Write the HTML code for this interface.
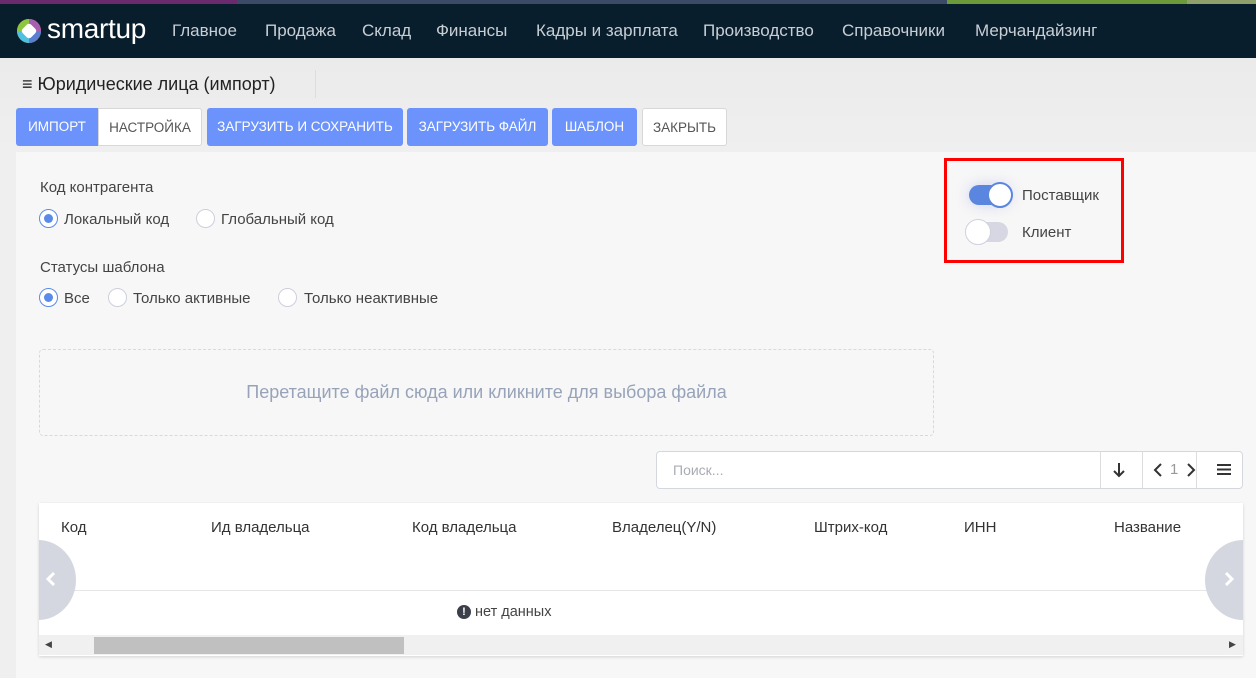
<!DOCTYPE html><html><head><meta charset="utf-8"><style>
*{box-sizing:border-box;margin:0;padding:0}
body{width:1256px;height:678px;overflow:hidden;font-family:"Liberation Sans","DejaVu Sans",sans-serif;background:linear-gradient(#e8e8e9,#efefef 150px);position:relative;color:#333}
.a{position:absolute;white-space:nowrap}
.nav{position:absolute;left:0;top:0;width:1256px;height:58px;background:#081e2d}
.nav .t{font-size:17px;color:#c9ced4}
.btn{position:absolute;top:108px;height:38px;line-height:38px;font-size:13.5px;text-align:center;border-radius:3px;color:#fff;background:#6b93fb}
.w{background:#fff;color:#555;border:1px solid #d8d8d8}
.lbl{font-size:15px;color:#444}
.rad{position:absolute;width:19px;height:19px;border-radius:50%;border:1px solid #ccd0da;background:#fff}
.rad.on{border-color:#5b8be8}
.rad.on:after{content:"";position:absolute;left:4px;top:4px;width:9px;height:9px;border-radius:50%;background:#5b8be8}
.th{font-size:15px;color:#333;top:519px}
</style></head><body>
<div class="a" style="left:0;top:0;width:237px;height:4px;background:#6b2a6e"></div>
<div class="a" style="left:237px;top:0;width:710px;height:4px;background:#3b4a66"></div>
<div class="a" style="left:947px;top:0;width:240px;height:4px;background:#6c9a3a"></div>
<div class="a" style="left:1187px;top:0;width:69px;height:4px;background:#8fa06b"></div>
<div class="nav" style="top:4px;height:54px">
<svg class="a" style="left:16px;top:13px" width="26" height="28" viewBox="0 0 26 28"><circle cx="13" cy="14" r="12" fill="#f08a2a"/><path d="M13 2A12 12 0 0 1 25 14L13 14Z" fill="#a75fb0"/><path d="M25 14A12 12 0 0 1 13 26L13 14Z" fill="#5b7fd0"/><path d="M13 26A12 12 0 0 1 1 14L13 14Z" fill="#4fc0e0"/><path d="M1 14A12 12 0 0 1 13 2L13 14Z" fill="#8cc63f"/><rect x="7" y="8" width="12" height="12" rx="3" fill="#fff" transform="rotate(45 13 14)"/></svg>
<div class="a" style="left:47px;top:9px;font-size:28px;color:#fff;letter-spacing:-0.3px">smartup</div>
<div class="a t" style="left:172px;top:17px">Главное</div>
<div class="a t" style="left:265px;top:17px">Продажа</div>
<div class="a t" style="left:362px;top:17px">Склад</div>
<div class="a t" style="left:436px;top:17px">Финансы</div>
<div class="a t" style="left:536px;top:17px">Кадры и зарплата</div>
<div class="a t" style="left:703px;top:17px">Производство</div>
<div class="a t" style="left:842px;top:17px">Справочники</div>
<div class="a t" style="left:975px;top:17px">Мерчандайзинг</div>
</div>
<div class="a" style="left:22px;top:74px;font-size:18px;color:#222">≡ Юридические лица (импорт)</div>
<div class="a" style="left:315px;top:70px;width:1px;height:28px;background:#ddd"></div>
<div class="btn" style="left:16px;width:82px;border-radius:3px 0 0 3px">ИМПОРТ</div>
<div class="btn w" style="left:98px;width:104px;border-radius:0 3px 3px 0">НАСТРОЙКА</div>
<div class="btn" style="left:207px;width:196px">ЗАГРУЗИТЬ И СОХРАНИТЬ</div>
<div class="btn" style="left:407px;width:141px">ЗАГРУЗИТЬ ФАЙЛ</div>
<div class="btn" style="left:552px;width:85px">ШАБЛОН</div>
<div class="btn w" style="left:642px;width:85px">ЗАКРЫТЬ</div>
<div class="a" style="left:16px;top:152px;width:1240px;height:526px;background:#f7f7f7"></div>
<div class="a lbl" style="left:40px;top:179px">Код контрагента</div>
<div class="rad on" style="left:39px;top:209px"></div><div class="a lbl" style="left:64px;top:211px">Локальный код</div>
<div class="rad" style="left:196px;top:209px"></div><div class="a lbl" style="left:221px;top:211px">Глобальный код</div>
<div class="a lbl" style="left:40px;top:259px">Статусы шаблона</div>
<div class="rad on" style="left:39px;top:288px"></div><div class="a lbl" style="left:64px;top:290px">Все</div>
<div class="rad" style="left:108px;top:288px"></div><div class="a lbl" style="left:133px;top:290px">Только активные</div>
<div class="rad" style="left:278px;top:288px"></div><div class="a lbl" style="left:304px;top:290px">Только неактивные</div>
<div class="a" style="left:944px;top:158px;width:180px;height:105px;border:3px solid #f00"></div>
<div class="a" style="left:969px;top:185px;width:42px;height:20px;border-radius:10px;background:#5b86e0;box-shadow:0 0 14px rgba(120,120,230,.3)"></div>
<div class="a" style="left:987px;top:182px;width:26px;height:26px;border-radius:50%;background:#fff;border:2px solid #5b86e0"></div>
<div class="a lbl" style="left:1022px;top:187px">Поставщик</div>
<div class="a" style="left:966px;top:222px;width:42px;height:20px;border-radius:10px;background:#d6d7e2"></div>
<div class="a" style="left:965px;top:219px;width:26px;height:26px;border-radius:50%;background:#fff;border:1px solid #d0d1dc"></div>
<div class="a lbl" style="left:1022px;top:224px">Клиент</div>
<div class="a" style="left:39px;top:349px;width:895px;height:87px;border:1px dashed #d6d9de;border-radius:4px;text-align:center;line-height:85px;font-size:18px;color:#97a3b8">Перетащите файл сюда или кликните для выбора файла</div>
<div class="a" style="left:656px;top:451px;width:587px;height:38px;border:1px solid #d4d8de;border-radius:4px;background:#fff"></div>
<div class="a" style="left:673px;top:462px;font-size:14px;color:#a8acb3">Поиск...</div>
<div class="a" style="left:1100px;top:452px;width:1px;height:36px;background:#ddd"></div>
<div class="a" style="left:1142px;top:452px;width:1px;height:36px;background:#ddd"></div>
<div class="a" style="left:1196px;top:452px;width:1px;height:36px;background:#ddd"></div>
<svg class="a" style="left:1112px;top:462px" width="14" height="16" viewBox="0 0 14 16"><path d="M7 1V14M2 9L7 14L12 9" fill="none" stroke="#333" stroke-width="2"/></svg>
<svg class="a" style="left:1153px;top:463px" width="10" height="14" viewBox="0 0 10 14"><path d="M8 1L2 7L8 13" fill="none" stroke="#333" stroke-width="2"/></svg>
<div class="a" style="left:1170px;top:461px;font-size:15px;color:#999">1</div>
<svg class="a" style="left:1186px;top:463px" width="10" height="14" viewBox="0 0 10 14"><path d="M2 1L8 7L2 13" fill="none" stroke="#333" stroke-width="2"/></svg>
<svg class="a" style="left:1217px;top:463px" width="14" height="13" viewBox="0 0 14 13"><path d="M0 2H14M0 6.5H14M0 11H14" stroke="#333" stroke-width="2"/></svg>
<div class="a" style="left:39px;top:503px;width:1204px;height:153px;background:#fff;box-shadow:0 1px 3px rgba(0,0,0,.15)"></div>
<div class="a th" style="left:61px">Код</div>
<div class="a th" style="left:211px">Ид владельца</div>
<div class="a th" style="left:412px">Код владельца</div>
<div class="a th" style="left:612px">Владелец(Y/N)</div>
<div class="a th" style="left:814px">Штрих-код</div>
<div class="a th" style="left:964px">ИНН</div>
<div class="a th" style="left:1114px">Название</div>
<div class="a" style="left:39px;top:590px;width:1204px;height:1px;background:#e6e6e6"></div>
<div class="a" style="left:0;top:540px;width:76px;height:80px;border-radius:50%;background:#d4d7e0;clip-path:inset(0 0 0 39px)"></div>
<svg class="a" style="left:46px;top:571px" width="10" height="16" viewBox="0 0 10 16"><path d="M8 2L2 8L8 14" fill="none" stroke="#fff" stroke-width="3"/></svg>
<div class="a" style="left:1205px;top:540px;width:76px;height:80px;border-radius:50%;background:#d4d7e0;clip-path:inset(0 38px 0 0)"></div>
<svg class="a" style="left:1224px;top:571px" width="10" height="16" viewBox="0 0 10 16"><path d="M2 2L8 8L2 14" fill="none" stroke="#fff" stroke-width="3"/></svg>
<div class="a" style="left:457px;top:605px;width:14px;height:14px;border-radius:50%;background:#3a3f4a;color:#fff;font-size:11px;font-weight:bold;text-align:center;line-height:14px">!</div>
<div class="a" style="left:475px;top:604px;font-size:14.5px;color:#444">нет данных</div>
<div class="a" style="left:39px;top:635px;width:1204px;height:20px;background:#f0f0f0"></div>
<div class="a" style="left:94px;top:637px;width:310px;height:17px;background:#c0c0c0"></div>
<div class="a" style="left:45px;top:639px;font-size:9px;color:#444">◀</div>
<div class="a" style="left:1229px;top:639px;font-size:9px;color:#444">▶</div>
</body></html>
